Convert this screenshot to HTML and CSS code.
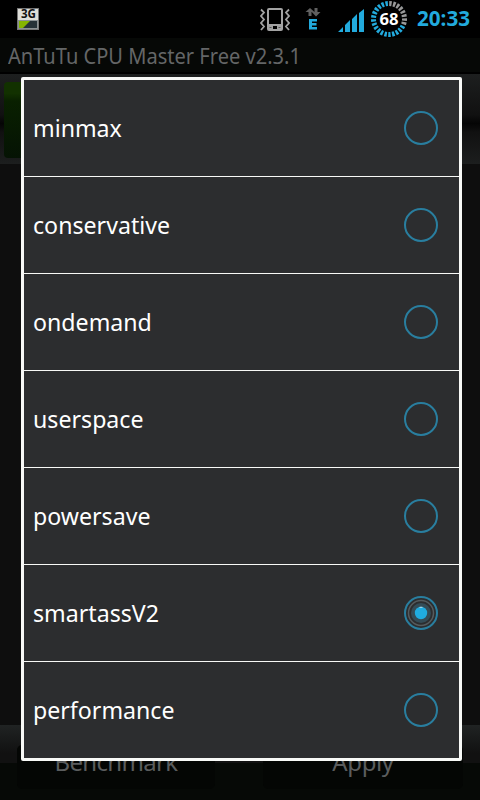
FILE: index.html
```
<!DOCTYPE html>
<html lang="en">
<head>
<meta charset="utf-8">
<title>AnTuTu CPU Master Free</title>
<link rel="stylesheet" href="styles.css">
</head>
<body>
<div class="screen">
  <header class="status">
    <svg class="net" width="22" height="22" viewBox="0 0 22 22">
      <rect width="22" height="22" fill="#777"/>
      <rect x="1" y="1" width="20" height="19" fill="#deded9"/>
      <rect x="1" y="12" width="20" height="9" fill="#8b9294"/>
      <rect x="2" y="13" width="18" height="7" fill="#263238"/>
      <path d="M2 13h11l-7 7H2z" fill="#84b500"/>
      <text x="4" y="10.200" class="net-text" textLength="15" lengthAdjust="spacingAndGlyphs">3G</text>
    </svg>
    <div class="tray">
      <svg class="vibrate" width="30" height="24" viewBox="0 0 30 24" fill="none" stroke="#a3a3a3">
        <rect x="8" y="1" width="14" height="21" rx="1" stroke-width="2"/>
        <path d="M8 16h14v6H8z" fill="#a3a3a3" stroke="none"/>
        <path d="M13 18h4v3h-4z" fill="#000" stroke="none"/>
        <path d="M9.500 19.500h2M18.500 19.500h2" stroke="#555"/>
        <path d="M1 1.500l3 3-3 3.500 3 3.500-3 3.500 3 3.500-3 3.500M29 1.500l-3 3 3 3.500-3 3.500 3 3.500-3 3.500 3 3.500" stroke-width="1.800"/>
      </svg>
      <svg class="edge" width="16" height="22" viewBox="0 0 16 22">
        <path d="M5 0l4.500 4H6.500v4h-3V4H.5zM9.500 0h3v4h3L11 8.500 6.800 4h2.700z" fill="#606060"/>
        <path d="M4 11h8v2.500H7V15h4.500v2.500H7V19h5v2.500H4z" fill="#22aadd"/>
      </svg>
      <svg class="signal" width="26" height="23" viewBox="0 0 26 23" fill="#22aadd">
        <path d="M0 23l5-5v5zM7 23v-7l5-5v12zM14 23V10l5-5v18zM21 23V4l5-4v23z"/>
      </svg>
      <svg class="battery" width="38" height="38" viewBox="0 0 38 38">
        <g fill="none" stroke-width="5" transform="rotate(-89 19 19)">
          <circle cx="19" cy="19" r="15.500" pathLength="100" stroke="#22aadd" stroke-dasharray="2.500 1.500"/>
          <circle cx="19" cy="19" r="15.500" pathLength="100" stroke="#000" stroke-width="6" stroke-dasharray="31 100"/>
          <circle cx="19" cy="19" r="15.500" pathLength="100" stroke="#999" stroke-dasharray="2.500 1.500 2.500 1.500 2.500 1.500 2.500 1.500 2.500 1.500 2.500 1.500 2.500 1.500 2.500 100"/>
        </g>
        <text x="19" y="25" class="battery-text" text-anchor="middle" textLength="19" lengthAdjust="spacingAndGlyphs">68</text>
      </svg>
      <span class="clock">20:33</span>
    </div>
  </header>
  <div class="titlebar"><span>AnTuTu CPU Master Free v2.3.1</span></div>
  <main class="content">
    <div class="banner"><div class="chip"></div></div>
    <div class="space"></div>
    <div class="panel"></div>
  </main>
  <footer class="actions">
    <div class="button bench">Benchmark</div>
    <div class="button apply">Apply</div>
  </footer>
  <div class="dialog" role="radiogroup">
    <div class="row"><span>minmax</span><i class="radio"></i></div>
    <div class="row"><span>conservative</span><i class="radio"></i></div>
    <div class="row"><span>ondemand</span><i class="radio"></i></div>
    <div class="row"><span>userspace</span><i class="radio"></i></div>
    <div class="row"><span>powersave</span><i class="radio"></i></div>
    <div class="row"><span>smartassV2</span>
      <svg class="checked" width="34" height="34" viewBox="0 0 34 34" fill="none">
        <circle cx="17" cy="17" r="16" stroke="#297e9f" stroke-width="2"/>
        <circle cx="17" cy="17" r="12.500" stroke="#555c5f" stroke-width="1.500"/>
        <circle cx="17" cy="17" r="10" fill="#344c57"/>
        <circle cx="17" cy="17" r="6.200" fill="#20ace0"/>
        <path d="M15.500 11.300h3" stroke="#b9dce8"/>
      </svg></div>
    <div class="row"><span>performance</span><i class="radio"></i></div>
  </div>
</div>
</body>
</html>
```
FILE: styles.css
```
* { box-sizing: border-box; }
body { margin: 0; background: #000; font-family: "Noto Sans", "Open Sans", sans-serif; }
.screen { position: relative; width: 480px; height: 800px; overflow: hidden; display: flex; flex-direction: column; background: #0e0e0e; }
.status { height: 38px; flex: none; display: flex; justify-content: space-between; background: #000; }
.net { margin: 8px 0 0 17px; overflow: visible; }
.net-text { font: 700 11.5px "Noto Sans", sans-serif; fill: #111; }
.tray { display: flex; align-items: flex-start; width: 221px; }
.vibrate { margin: 8px 0 0 1px; }
.edge { margin: 8px 0 0 15px; }
.signal { margin: 9px 0 0 17px; }
.battery { margin-left: 6px; }
.battery-text { font: 700 16.5px "Noto Sans", sans-serif; fill: #fff; }
.clock { margin-left: 9px; line-height: 36px; font-size: 21.5px; font-weight: 700; color: #22aadd; white-space: nowrap; transform: scaleX(0.96); transform-origin: left; }
.titlebar { height: 36px; flex: none; padding-left: 8px; line-height: 35px; font-size: 22px; color: #646667; background: #060806; border-bottom: 2px solid #000; white-space: nowrap; }
.titlebar span { display: inline-block; transform: scaleX(0.912); transform-origin: left; }
.content { flex: 0 0 689px; display: flex; flex-direction: column; }
.banner { height: 90px; padding: 8px 4px; background: linear-gradient(#1d1f1f, #111 45%, #050505 55%, #111 65%, #1c1e1e); }
.chip { width: 40px; height: 76px; border-radius: 4px; background: linear-gradient(#123100 15%, #092000 25%, #051304); }
.space { flex: 1; }
.panel { height: 38px; background: linear-gradient(#202323, #111 75%); }
.actions { height: 37px; flex: none; display: flex; justify-content: space-between; padding: 0 17px; background: #060906; }
.button { height: 44px; border-radius: 5px; background: #040604; color: #5b5d5e; font-size: 24px; line-height: 33px; margin-top: -18px; text-align: center; }
.bench { width: 198px; letter-spacing: -0.65px; }
.apply { width: 200px; letter-spacing: -0.4px; }
.dialog { position: absolute; left: 21px; top: 77px; width: 441px; height: 684px; border: 3px solid #f8f9f7; border-radius: 2px; background: #2c2d2f; color: #fff; }
.row { height: 97px; display: flex; align-items: center; justify-content: space-between; padding: 0 21px 0 9px; border-bottom: 1px solid #f8f9f7; font-size: 24px; }
.row:last-child { border-bottom-color: transparent; }
.row span { line-height: 32px; white-space: nowrap; transform: scaleX(0.965); transform-origin: left; }
.radio { width: 34px; height: 34px; border: 2px solid #297e9f; border-radius: 50%; }
```
